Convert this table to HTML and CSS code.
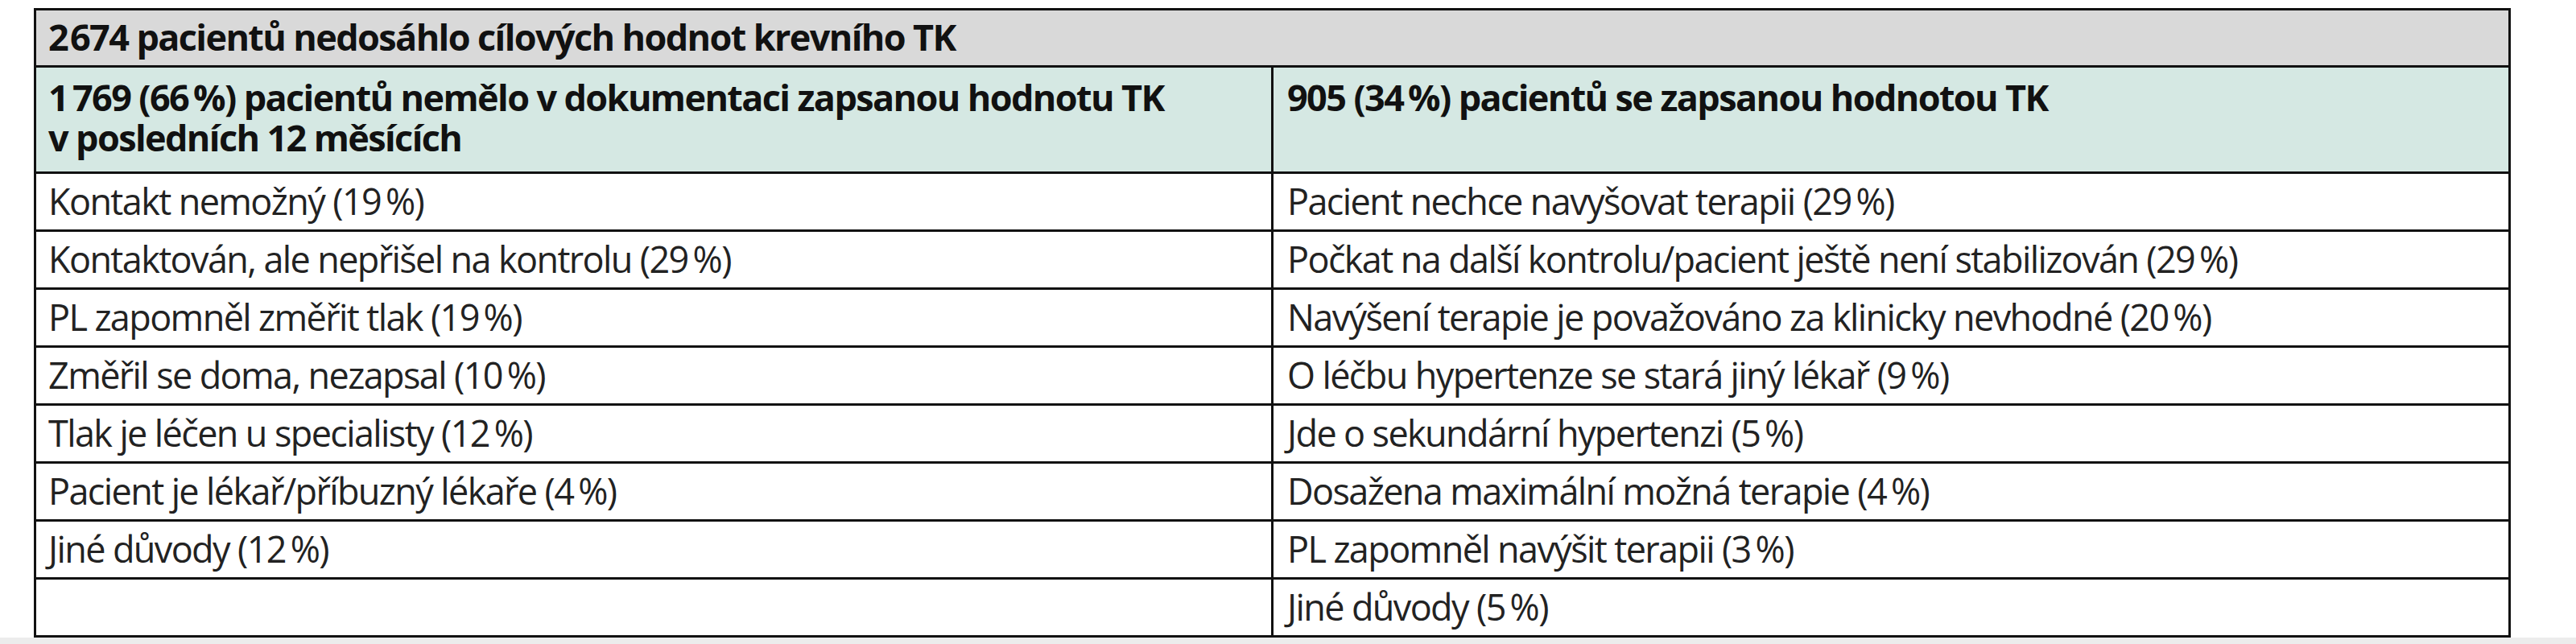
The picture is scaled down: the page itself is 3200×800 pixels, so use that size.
FILE: index.html
```html
<!DOCTYPE html>
<html lang="cs">
<head>
<meta charset="utf-8">
<title>Důvody nedosažení cílových hodnot TK</title>
<link rel="stylesheet" href="styles.css">
</head>
<body>
<div class="page">
  <table class="tk">
    <colgroup><col class="c"><col class="c"></colgroup>
    <thead>
      <tr class="top"><th colspan="2">2&#8202;674 pacientů nedosáhlo cílových hodnot krevního TK</th></tr>
      <tr class="sub">
        <th>1&#8201;769 (66&#8201;%) pacientů nemělo v&nbsp;dokumentaci zapsanou hodnotu TK v&nbsp;posledních 12 měsících</th>
        <th>905 (34&#8201;%) pacientů se zapsanou hodnotou TK</th>
      </tr>
    </thead>
    <tbody>
      <tr><td>Kontakt nemožný (19&#8201;%)</td><td>Pacient nechce navyšovat terapii (29&#8201;%)</td></tr>
      <tr><td>Kontaktován, ale nepřišel na kontrolu (29&#8201;%)</td><td>Počkat na další kontrolu/pacient ještě není stabilizován (29&#8201;%)</td></tr>
      <tr><td>PL zapomněl změřit tlak (19&#8201;%)</td><td>Navýšení terapie je považováno za klinicky nevhodné (20&#8201;%)</td></tr>
      <tr><td>Změřil se doma, nezapsal (10&#8201;%)</td><td>O léčbu hypertenze se stará jiný lékař (9&#8201;%)</td></tr>
      <tr><td>Tlak je léčen u specialisty (12&#8201;%)</td><td>Jde o sekundární hypertenzi (5&#8201;%)</td></tr>
      <tr><td>Pacient je lékař/příbuzný lékaře (4&#8201;%)</td><td>Dosažena maximální možná terapie (4&#8201;%)</td></tr>
      <tr><td>Jiné důvody (12&#8201;%)</td><td>PL zapomněl navýšit terapii (3&#8201;%)</td></tr>
      <tr><td></td><td>Jiné důvody (5&#8201;%)</td></tr>
    </tbody>
  </table>
</div>
</body>
</html>
```
FILE: styles.css
```css
html, body {
  margin: 0;
  padding: 0;
  background: #ececec;
}

.page {
  background: #ffffff;
  padding: 10px 0 0 42px;
  width: 3158px;
}

.tk {
  border-collapse: collapse;
  table-layout: fixed;
  width: 3077px;
  font-family: "Open Sans", "Noto Sans", sans-serif;
  font-size: 45px;
  line-height: 50px;
  letter-spacing: -0.036em;
  color: #222;
}

.tk .c {
  width: 50%;
}

.tk th,
.tk td {
  border: 3px solid #111;
  text-align: left;
  vertical-align: top;
  padding: 9px 16px 10px 15px;
}

.tk th {
  font-weight: 700;
  color: #111;
}

.tk .top th {
  background: #d9d9d9;
  padding-top: 8px;
  padding-bottom: 10px;
}

.tk .sub th {
  background: #d5e8e3;
  padding-top: 12px;
  padding-bottom: 17px;
}

.tk td {
  font-weight: 400;
  height: 50px;
}

.tk td + td,
.tk th + th {
  padding-left: 17px;
}
```
